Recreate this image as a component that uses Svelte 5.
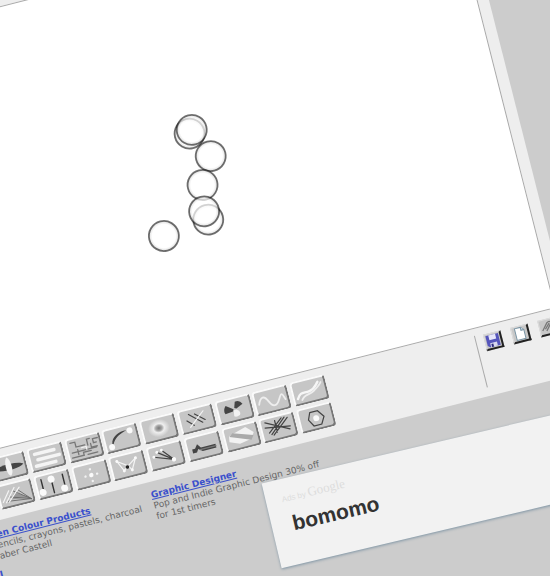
<script lang="ts">
	type Shape = [kind: string, d: string];

	const circles = [
		{ x: 311, y: 186 },
		{ x: 314, y: 183 },
		{ x: 326, y: 213 },
		{ x: 311, y: 239 },
		{ x: 308, y: 274 },
		{ x: 306, y: 265 },
		{ x: 261, y: 279 }
	];

	// Zero length segments in "dot" and "ball" become round blobs
	const tools: { name: string; shapes: Shape[] }[] = [
		{
			name: 'Propeller',
			shapes: [
				['ink', 'M1 11C6 7 26 7 31 11C26 15 6 15 1 11Z'],
				['chalk', 'M16 1C20 4 20 18 16 20C12 18 12 4 16 1Z']
			]
		},
		{ name: 'Bars', shapes: [['bar', 'M5 5H25'], ['bar', 'M7 11H29'], ['bar', 'M4 17H24']] },
		{
			name: 'Circuit',
			shapes: [
				['wire', 'M3 3H8V8H17M3 13H28M2 18H14V15H22M20 9V3H23M23 8V12H29M29 8H26V4H31M9 16V11M18 18H28'],
				['hair', 'M13 10H18V13']
			]
		},
		{
			name: 'Arc',
			shapes: [
				['ink', 'M6 14C7 7 15 3 23 4C16 6 10 8 7 15Z'],
				['ball', 'M5 17h0'],
				['ball', 'M26 5h0']
			]
		},
		{ name: 'Glow', shapes: [] },
		{
			name: 'Crosses',
			shapes: [
				['thin', 'M9 4L21 15M15 5L24 13M6 10L12 16'],
				['hair', 'M8 17L24 4']
			]
		},
		{
			name: 'Fan',
			shapes: [
				['ink', 'M15 10L8 5Q4 9 6 13L14 12Z'],
				['ink', 'M16 9L18 3Q23 2 25 7L18 10Z'],
				['chalk', 'M15 11L18 11Q22 14 20 17Q16 19 14 17Z']
			]
		},
		{ name: 'Wave', shapes: [['curve', 'M3 12C6 4 10 4 13 11S20 18 24 11S28 8 30 13']] },
		{
			name: 'Ribbon',
			shapes: [
				['ribbon', 'M3 16C7 9 10 12 16 11S23 7 26 4'],
				['curve', 'M7 18C10 13 15 15 20 12S27 8 29 5']
			]
		},
		{
			name: 'Rays',
			shapes: [
				['fog', 'M30 18L15 9L10 15Z'],
				['pencil', 'M30 19L7 16M30 19L9 12M30 19L14 7M30 19L19 7'],
				['hair', 'M2 16L10 6M5 17L16 4M8 17L21 5']
			]
		},
		{
			name: 'Sliders',
			shapes: [
				['line', 'M5 3V14M15 8V19M27 3V15'],
				['knob', 'M4 16h0'],
				['knob', 'M15 5h0'],
				['knob', 'M26 17h0']
			]
		},
		{
			name: 'Spark',
			shapes: [
				['spot', 'M16 11h0'],
				['speck', 'M16 5h0M16 17h0M10 11h0M22 11h0']
			]
		},
		{
			name: 'Web',
			shapes: [
				['hair', 'M6 4L11 15L16 11L19 16L25 5L16 11L6 4'],
				['dot', 'M6 4h0M11 15h0M19 16h0M25 5h0'],
				['blackdot', 'M15 12h0']
			]
		},
		{
			name: 'Brush',
			shapes: [
				['thin', 'M4 9L23 16M8 5L23 16M13 4L23 16'],
				['dot', 'M4 9h0M8 5h0M13 4h0'],
				['spot', 'M23 16h0']
			]
		},
		{ name: 'Ridge', shapes: [['ink', 'M4 11H7L10 7L13 11H28V15H14L10 12L8 15H4Z'], ['wire', 'M12 13H28']] },
		{
			name: 'Slabs',
			shapes: [
				['chalk', 'M3 13L4 7L22 2L29 9L25 15L13 17Z'],
				['mid', 'M8 5L28 12L25 16L4 8Z']
			]
		},
		{
			name: 'Scratch',
			shapes: [['thin', 'M4 3L27 15M3 8L28 12M6 14L21 2M10 17L27 3M8 16L24 2M14 3L14 15']]
		},
		{ name: 'Hexagon', shapes: [['outline', 'M11 4L19 4L24 11L20 18L12 18L8 11Z'], ['ball', 'M16 11h0']] }
	];

	const ads = [
		{ title: 'Pen Colour Products', lines: ['Pencils, crayons, pastels, charcoal', 'Faber Castell'] },
		{ title: 'Graphic Designer', lines: ['Pop and Indie Graphic Design 30% off', 'for 1st timers'] },
		{ title: 'I', lines: [] }
	];

	let selected = $state('Glow');
</script>

<div class="stage">
	<div class="page">
		<main class="board">
			<svg class="canvas" role="img" aria-label="Drawing">
				<defs>
					<radialGradient id="bubble">
						<stop offset="0.78" stop-color="#fff" stop-opacity="0.7" />
						<stop offset="1" stop-color="#ccc" stop-opacity="0.7" />
					</radialGradient>
				</defs>
				{#each circles as circle}
					<circle cx={circle.x} cy={circle.y} r="15" fill="url(#bubble)" />
				{/each}
			</svg>

			<div class="toolbar">
				<div class="tools">
					{#each tools as tool (tool.name)}
						<button class="tool" aria-label={tool.name} onclick={() => (selected = tool.name)}>
							<svg viewBox="0 0 32 21">
								{#if tool.name === 'Glow'}
									<defs>
										<radialGradient id="glow">
											<stop offset="0" stop-color="#777" />
											<stop offset="0.3" stop-color="#aaa" />
											<stop offset="0.5" stop-color="#eee" />
											<stop offset="1" stop-color="#c6c6c6" />
										</radialGradient>
									</defs>
									<ellipse cx="16" cy="10" rx="11" ry="9" fill="url(#glow)" />
								{/if}
								{#each tool.shapes as [kind, d]}
									<path class={kind} {d} />
								{/each}
							</svg>
						</button>
					{/each}
				</div>

				<div class="actions">
					<button class="action" aria-label="Save">
						<svg viewBox="0 0 15 14">
							<path d="M1 1H14V13H3L1 11Z" fill="#5555bb" />
							<path d="M4 1H11V6H4Z" fill="#e6e6fa" />
							<path d="M4 9H11V13H4Z" fill="#d8d8ee" />
							<path d="M5 10H7V13H5Z" fill="#29297c" />
						</svg>
					</button>
					<button class="action" aria-label="New">
						<svg viewBox="0 0 15 14">
							<path d="M3 1H9L12 4V13H3Z" fill="#fff" stroke="#7893a3" />
							<path d="M9 1V4H12" fill="#cde" stroke="#7893a3" />
						</svg>
					</button>
					<button class="action" aria-label="Undo">
						<svg viewBox="0 0 15 14">
							<path d="M2 10L8 3Q11 1 12 4L6 11M5 9L10 4" fill="none" stroke="#777" stroke-width="1.3" />
						</svg>
					</button>
				</div>
			</div>
		</main>

		<footer class="ads">
			{#each ads as ad}
				<div class="ad">
					<a href="#ad">{ad.title}</a>
					{#each ad.lines as line}
						<p>{line}</p>
					{/each}
				</div>
			{/each}

			<aside class="card">
				<p class="by">Ads by <span>Google</span></p>
				<h1>bomomo</h1>
			</aside>
		</footer>
	</div>
</div>

<style>
	:global(body) {
		margin: 0;
		background: #ccc;
	}

	.stage {
		height: 100vh;
		overflow: hidden;
		font-family: 'DejaVu Sans', Verdana, sans-serif;
	}

	/* The whole page is tipped over, hung from the window's corner */
	.page {
		width: calc(100% + 84px);
		margin: -10px 0 0 -160px;
		transform: rotate(-14.2deg);
		transform-origin: 160px 10px;
	}

	.stage,
	.page {
		display: flow-root;
	}

	.board {
		padding: 16px 11px 0 0;
		background: #eee;
	}

	.canvas {
		display: block;
		box-sizing: border-box;
		width: 100%;
		height: 429px;
		background: #fff;
		border: 1px solid #aaa;
	}

	.canvas circle {
		stroke: #000;
		stroke-opacity: 0.55;
		stroke-width: 1.8;
		transform: translate(-1px, -17px);
	}

	.toolbar {
		display: flex;
		justify-content: space-between;
		padding: 7px 0 9px 36px;
	}

	.tools {
		display: grid;
		grid-template-columns: repeat(9, 36px);
		justify-content: space-between;
		gap: 3px 0;
		width: 346px;
	}

	button {
		box-sizing: border-box;
		padding: 0;
	}

	.tool {
		height: 25px;
		background: #c6c6c6;
		border: 2px solid #fafafa;
		border-right-color: #777;
		border-bottom-color: #777;
		border-radius: 4px;
	}

	.tool svg,
	.action svg {
		display: block;
		width: 100%;
		height: 100%;
	}

	.tool path {
		fill: none;
		stroke-linecap: round;
	}

	.tool .ink {
		fill: #444;
	}

	.tool .chalk {
		fill: #f2f2f2;
	}

	.tool .fog {
		fill: #999;
	}

	.tool .mid {
		fill: #aaa;
	}

	.tool .bar {
		stroke: #f4f4f4;
		stroke-width: 3.5;
	}

	.tool .wire {
		stroke: #777;
		stroke-width: 1.3;
	}

	.tool .hair {
		stroke: #f4f4f4;
		stroke-width: 1.2;
	}

	.tool .thin,
	.tool .outline {
		stroke: #444;
		stroke-width: 1.2;
	}

	.tool .pencil {
		stroke: #666;
		stroke-width: 0.8;
	}

	.tool .line {
		stroke: #333;
		stroke-width: 1.4;
	}

	.tool .curve {
		stroke: #eee;
		stroke-width: 1.8;
	}

	.tool .ribbon {
		stroke: #f6f6f6;
		stroke-width: 2.4;
	}

	.tool .ball {
		stroke: #fafafa;
		stroke-width: 6;
	}

	.tool .spot {
		stroke: #fafafa;
		stroke-width: 4.4;
	}

	.tool .knob {
		stroke: #fafafa;
		stroke-width: 7;
	}

	.tool .dot {
		stroke: #fafafa;
		stroke-width: 3;
	}

	.tool .speck {
		stroke: #f2f2f2;
		stroke-width: 2.4;
	}

	.tool .blackdot {
		stroke: #222;
		stroke-width: 3.5;
	}

	.actions {
		display: flex;
		align-items: flex-start;
		gap: 10px;
		padding: 1px 3px 0 8px;
		border-left: 1px solid #aaa;
	}

	.action {
		width: 18px;
		height: 17px;
		background: #c8c8c8;
		border: 1px solid #ddd;
		border-right: 2px solid #222;
		border-bottom: 2px solid #222;
	}

	.ads {
		position: relative;
		display: grid;
		grid-template-columns: 166px 1fr;
		gap: 7px 0;
		padding: 8px 0 0 19px;
		color: #666;
		font-size: 9px;
		line-height: 11px;
	}

	.ad {
		white-space: nowrap;
	}

	.ad a {
		display: block;
		width: max-content;
		color: #3a50cc;
		font-weight: bold;
	}

	.ad p {
		margin: 0;
	}

	.card {
		position: absolute;
		top: 29px;
		left: 295px;
		box-sizing: border-box;
		width: 100%;
		height: 87px;
		padding: 12px 16px;
		background: #f2f2f2;
		box-shadow: 0 1px 3px #7d93a3;
		transform: rotate(0.9deg);
		transform-origin: 0 0;
		font-family: 'Liberation Sans', Arial, sans-serif;
	}

	.by {
		margin: 0;
		color: #ddd;
		font-size: 8px;
		line-height: 14px;
	}

	.by span {
		font-family: 'Liberation Serif', serif;
		font-size: 13px;
	}

	h1 {
		margin: 5px 0 0 5px;
		color: #333;
		font-size: 21px;
		line-height: 26px;
	}
</style>
